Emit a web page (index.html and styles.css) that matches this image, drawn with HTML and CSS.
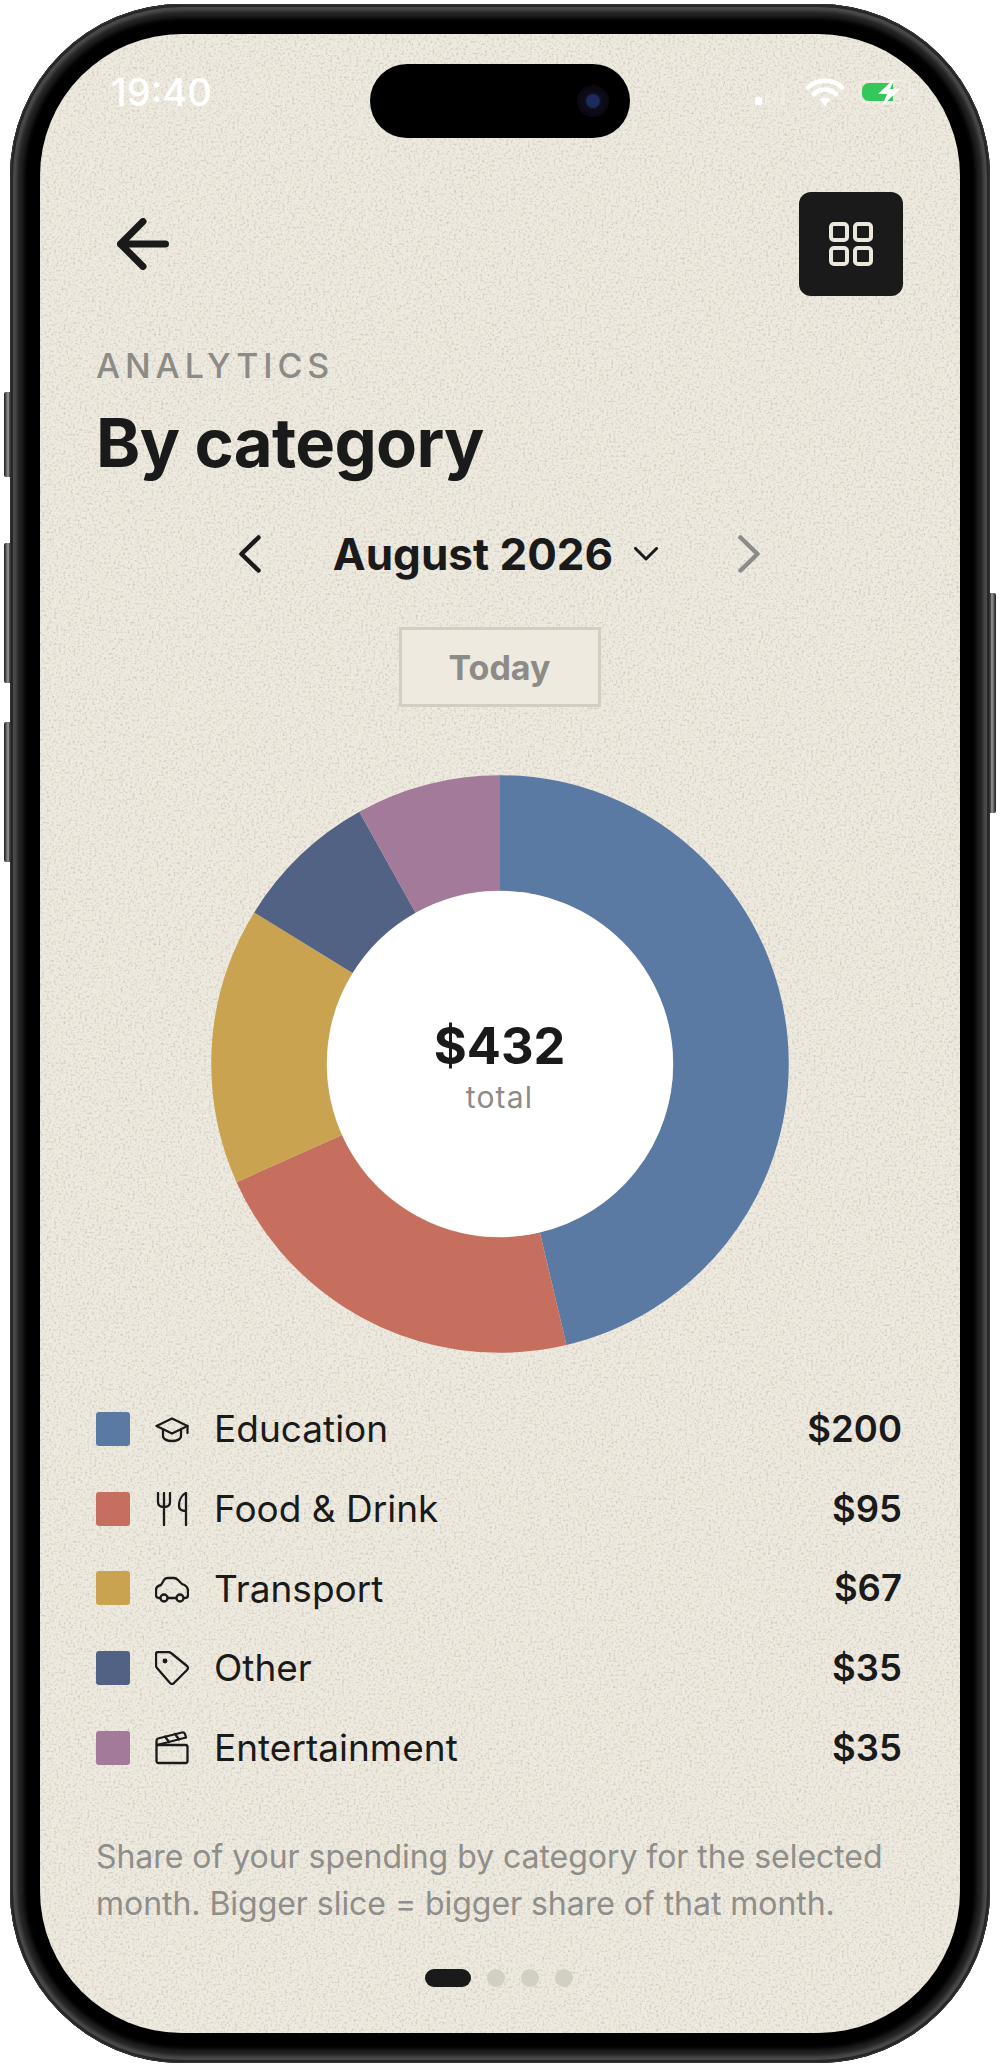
FILE: index.html
```html
<!DOCTYPE html>
<html lang="en">
<head>
    <meta charset="UTF-8">
    <meta name="viewport" content="width=device-width, initial-scale=1.0">
    <title>By category</title>
    <link rel="stylesheet" href="styles.css">
</head>
<body>
    <div class="phone">
        <span class="side-btn side-a"></span>
        <span class="side-btn side-b"></span>
        <span class="side-btn side-c"></span>
        <span class="side-btn side-d"></span>
        <div class="bezel">
            <div class="screen">
                <svg class="grain" width="100%" height="100%">
                    <filter id="grain-filter">
                        <feTurbulence type="fractalNoise" baseFrequency="0.42" numOctaves="3" seed="4"/>
                        <feColorMatrix type="matrix" values="0 0 0 0 0.55  0 0 0 0 0.53  0 0 0 0 0.46  0 0 0 -2 1.04"/>
                    </filter>
                    <rect width="100%" height="100%" filter="url(#grain-filter)"/>
                </svg>

                <div class="island"><span class="camera"></span></div>

                <div class="content">
                    <!-- status bar -->
                    <div class="status">
                        <span class="time">19:40</span>
                        <div class="status-icons">
                            <svg class="signal" width="30" height="28" viewBox="0 0 30 28">
                                <rect x="0" y="19" width="7" height="8" rx="1.5" fill="#fff"/>
                                <rect x="10" y="14" width="5" height="13" rx="1.5" fill="#fff" opacity=".18"/>
                                <rect x="18" y="9" width="5" height="18" rx="1.5" fill="#fff" opacity=".18"/>
                                <rect x="26" y="4" width="4" height="23" rx="1.5" fill="#fff" opacity=".18"/>
                            </svg>
                            <svg class="wifi" width="38" height="28" viewBox="0 0 38 28">
                                <path d="M2 9.5C11.5 .5 26.5 .5 36 9.5M8 16c6.500-5.800 15.500-5.800 22 0" fill="none" stroke="#fff" stroke-width="4.600" stroke-linecap="round"/>
                                <path d="M13.500 21.500c3-2.700 8-2.700 11 0L19 28z" fill="#fff"/>
                            </svg>
                            <svg class="battery" width="56" height="28" viewBox="0 0 56 28">
                                <rect x="1" y="3" width="50" height="22" rx="7" fill="none" stroke="#fff" stroke-opacity=".35" stroke-width="1.500"/>
                                <path d="M53 10v8c1.500-.5 2.500-2 2.500-4s-1-3.500-2.500-4z" fill="#fff" fill-opacity=".35"/>
                                <path d="M10 5h24v18H10a7 7 0 0 1-7-7v-4a7 7 0 0 1 7-7z" fill="#34c759"/>
                                <path d="M36 0L19 16h9l-5 12 18-17h-10z" fill="#fff"/>
                            </svg>
                        </div>
                    </div>

                    <!-- top bar -->
                    <div class="topbar">
                        <svg class="back" width="52" height="52" viewBox="0 0 52 52">
                            <path d="M3.500 26H48.500M26 3.500L3.500 26L26 48.500" fill="none" stroke="#1a1a1a" stroke-width="7" stroke-linecap="round" stroke-linejoin="round"/>
                        </svg>
                        <button class="grid-btn">
                            <svg width="44" height="44" viewBox="0 0 44 44">
                                <rect x="2" y="2" width="16" height="16" rx="3" class="grid-cell"/>
                                <rect x="26" y="2" width="16" height="16" rx="3" class="grid-cell"/>
                                <rect x="2" y="26" width="16" height="16" rx="3" class="grid-cell"/>
                                <rect x="26" y="26" width="16" height="16" rx="3" class="grid-cell"/>
                            </svg>
                        </button>
                    </div>

                    <div class="eyebrow">ANALYTICS</div>
                    <h1 class="title">By category</h1>

                    <!-- month switcher -->
                    <div class="month-row">
                        <svg width="22" height="38" viewBox="0 0 22 38">
                            <path d="M19.500 2.500L2.500 19L19.500 35.500" class="chev"/>
                        </svg>
                        <div class="month">
                            <span>August 2026</span>
                            <svg width="24" height="14" viewBox="0 0 24 14">
                                <path d="M1.500 1.500L12 12L22.500 1.500" class="chev chev-thin"/>
                            </svg>
                        </div>
                        <svg width="22" height="38" viewBox="0 0 22 38">
                            <path d="M2.500 2.500L19.500 19L2.500 35.500" class="chev chev-off"/>
                        </svg>
                    </div>

                    <div class="today-row"><button class="today">Today</button></div>

                    <!-- donut, one unit of the circle = $1 -->
                    <div class="chart">
                        <svg width="578" height="578" viewBox="0 0 578 578">
                            <g class="slices">
                                <circle cx="289" cy="289" r="231" pathLength="432" stroke="#5a7aa3" stroke-dasharray="200 232" stroke-dashoffset="0"/>
                                <circle cx="289" cy="289" r="231" pathLength="432" stroke="#c76f5f" stroke-dasharray="95 337" stroke-dashoffset="-200"/>
                                <circle cx="289" cy="289" r="231" pathLength="432" stroke="#c9a350" stroke-dasharray="67 365" stroke-dashoffset="-295"/>
                                <circle cx="289" cy="289" r="231" pathLength="432" stroke="#526285" stroke-dasharray="35 397" stroke-dashoffset="-362"/>
                                <circle cx="289" cy="289" r="231" pathLength="432" stroke="#a37a9a" stroke-dasharray="35 397" stroke-dashoffset="-397"/>
                            </g>
                        </svg>
                        <div class="chart-hole">
                            <div class="total">$432</div>
                            <div class="total-label">total</div>
                        </div>
                    </div>

                    <!-- legend -->
                    <ul class="legend">
                        <li class="legend-row">
                            <span class="swatch swatch-education"></span>
                            <svg class="cat-icon" viewBox="0 0 34 34">
                                <path d="M1.500 14L17 6.500L32.500 14L17 21.500Z"/>
                                <path d="M8 18V24C8 27 12 29 17 29C22 29 26 27 26 24V18M32.500 14V21"/>
                            </svg>
                            <span class="cat-name">Education</span>
                            <span class="cat-amount">$200</span>
                        </li>
                        <li class="legend-row">
                            <span class="swatch swatch-food"></span>
                            <svg class="cat-icon" viewBox="0 0 34 34">
                                <path d="M9 1V33M3 1V10Q3 15 9 15Q15 15 15 10V1"/>
                                <path d="M31 1V33M31 1C26 3 24 9 24 14C24 17 26 19 31 19"/>
                            </svg>
                            <span class="cat-name">Food &amp; Drink</span>
                            <span class="cat-amount">$95</span>
                        </li>
                        <li class="legend-row">
                            <span class="swatch swatch-transport"></span>
                            <svg class="cat-icon" viewBox="0 0 34 34">
                                <path d="M5 27H4Q1 27 1 24V19Q1 15 6 14L9 9Q10 7 13 7H19Q21 7 23 9L27 13Q33 15 33 20V24Q33 27 30 27H29M13 27H21"/>
                                <circle cx="9" cy="27" r="3.500"/>
                                <circle cx="25" cy="27" r="3.500"/>
                            </svg>
                            <span class="cat-name">Transport</span>
                            <span class="cat-amount">$67</span>
                        </li>
                        <li class="legend-row">
                            <span class="swatch swatch-other"></span>
                            <svg class="cat-icon" viewBox="0 0 34 34">
                                <path d="M1 3Q1 1 3 1H13Q15 1 16 2L32 15Q34 17 32 19L19 32Q17 34 15 32L2 17Q1 16 1 14Z"/>
                                <circle cx="10" cy="10" r="1.300" class="cat-dot"/>
                            </svg>
                            <span class="cat-name">Other</span>
                            <span class="cat-amount">$35</span>
                        </li>
                        <li class="legend-row">
                            <span class="swatch swatch-fun"></span>
                            <svg class="cat-icon" viewBox="0 0 34 34">
                                <rect x="1.500" y="14" width="31" height="18" rx="2"/>
                                <path d="M1.500 14V10Q1.500 8 3 7.500L27 1.500Q29 1 30 3L31 6.500L2 14M10 5.500L14 11M20 3L24 8.500"/>
                            </svg>
                            <span class="cat-name">Entertainment</span>
                            <span class="cat-amount">$35</span>
                        </li>
                    </ul>

                    <p class="note">Share of your spending by category for the selected month. Bigger slice = bigger share of that month.</p>

                    <div class="pager">
                        <span class="pager-on"></span>
                        <span class="pager-dot"></span>
                        <span class="pager-dot"></span>
                        <span class="pager-dot"></span>
                    </div>
                </div>
            </div>
        </div>
    </div>
</body>
</html>
```

FILE: styles.css
```css
* {
    box-sizing: border-box;
}
body {
    margin: 0;
    padding: 4px 10px;
    background-color: #fff;
    font-family: 'Inter', 'Liberation Sans', sans-serif;
    color: #1a1a1a;
}
.phone {
    position: relative;
    height: 2059px;
    padding: 12px;
    border-radius: 172px;
    background: #1f1f1f;
    box-shadow: inset 0 0 0 1px #333, inset 0 0 0 3px #262626, inset 0 0 3px 7px #4a4a4a, inset 0 0 0 10px #242424;
}
.side-btn {
    position: absolute;
    width: 6px;
    background: linear-gradient(90deg, #1c1c1c, #999 70%, #2a2a2a);
}
.side-a {
    left: -6px;
    top: 388px;
    height: 85px;
    border-radius: 2px 0 0 2px;
}
.side-b {
    left: -6px;
    top: 539px;
    height: 140px;
    border-radius: 2px 0 0 2px;
}
.side-c {
    left: -6px;
    top: 718px;
    height: 140px;
    border-radius: 2px 0 0 2px;
}
.side-d {
    right: -6px;
    top: 589px;
    height: 220px;
    border-radius: 0 2px 2px 0;
    background: linear-gradient(270deg, #1c1c1c, #999 70%, #2a2a2a);
}
.bezel {
    height: 100%;
    padding: 18px;
    border-radius: 160px;
    background: #000;
    box-shadow: inset 0 0 5px 1px #2c2c2c;
}
.screen {
    position: relative;
    height: 100%;
    border-radius: 142px;
    background-color: #efeadf;
    overflow: hidden;
}
.grain {
    position: absolute;
    inset: 0;
}
.island {
    position: absolute;
    left: 330px;
    top: 30px;
    width: 260px;
    height: 74px;
    border-radius: 37px;
    background: #000;
}
.camera {
    position: absolute;
    right: 21px;
    top: 21px;
    width: 32px;
    height: 32px;
    border-radius: 50%;
    background: radial-gradient(circle, #1c2a5c 0 6px, #0d0d1c 8px, #0a0710 16px);
}
.content {
    position: relative;
    padding: 44px 57px 0 56px;
}

/* status bar */
.status {
    display: flex;
    justify-content: space-between;
    align-items: center;
    height: 28px;
    padding-left: 15px;
}
.time {
    color: #fff;
    font-size: 38px;
    font-weight: 500;
    line-height: 28px;
}
.status-icons {
    display: flex;
    align-items: center;
    gap: 15px;
    margin-right: -12px;
}
.signal {
    margin-right: 6px;
}

/* top bar */
.topbar {
    display: flex;
    justify-content: space-between;
    align-items: center;
    margin-top: 86px;
    padding-left: 21px;
}
.grid-btn {
    display: flex;
    justify-content: center;
    align-items: center;
    width: 104px;
    height: 104px;
    padding: 0;
    border: none;
    border-radius: 12px;
    background: #1a1a1a;
}
.grid-cell {
    fill: none;
    stroke: #ece7dc;
    stroke-width: 4;
}

.eyebrow {
    margin-top: 52px;
    color: #8c8b88;
    font-size: 34px;
    font-weight: 500;
    line-height: 36px;
    letter-spacing: 4.900px;
}
.title {
    margin: 19px 0 0;
    font-size: 67px;
    font-weight: 700;
    line-height: 80px;
    letter-spacing: -0.7px;
}

/* month switcher */
.month-row {
    display: flex;
    justify-content: space-between;
    align-items: center;
    margin-top: 46px;
    padding: 0 143px;
}
.month {
    display: flex;
    align-items: center;
    gap: 21px;
    margin-right: 8px;
    font-size: 44px;
    font-weight: 700;
    line-height: 50px;
}
.chev {
    fill: none;
    stroke: #1a1a1a;
    stroke-width: 4.500;
    stroke-linecap: round;
    stroke-linejoin: round;
}
.chev-thin {
    stroke-width: 3;
}
.chev-off {
    stroke: #8c8b88;
}
.today-row {
    display: flex;
    justify-content: center;
    margin-top: 48px;
}
.today {
    width: 202px;
    height: 80px;
    padding: 0;
    border: 3px solid #d2cec2;
    background: #efeadf;
    color: #8c8b88;
    font-family: inherit;
    font-size: 34px;
    font-weight: 700;
}

/* donut */
.chart {
    position: relative;
    width: 578px;
    height: 578px;
    margin: 68px auto 0;
}
.slices {
    transform: rotate(-90deg);
    transform-origin: 289px 289px;
}
.slices circle {
    fill: none;
    stroke-width: 115.500;
}
.chart-hole {
    position: absolute;
    left: 116px;
    top: 116px;
    width: 346px;
    height: 346px;
    border-radius: 50%;
    background: #fff;
    text-align: center;
    padding-top: 126px;
}
.total {
    font-size: 50.500px;
    font-weight: 700;
    line-height: 58px;
}
.total-label {
    margin-top: 4px;
    color: #8c8b88;
    font-size: 30px;
    line-height: 36px;
    letter-spacing: 1.200px;
}

/* legend */
.legend {
    margin: 36px 0 0;
    padding: 0;
    list-style: none;
}
.legend-row {
    display: flex;
    align-items: center;
    height: 79.700px;
}
.swatch {
    width: 34px;
    height: 34px;
    border-radius: 3px;
}
.swatch-education { background: #5a7aa3; }
.swatch-food { background: #c76f5f; }
.swatch-transport { background: #c9a350; }
.swatch-other { background: #526285; }
.swatch-fun { background: #a37a9a; }
.cat-icon {
    width: 34px;
    height: 34px;
    margin: 0 25px 0 25px;
    fill: none;
    stroke: #1a1a1a;
    stroke-width: 2.300;
    stroke-linecap: round;
    stroke-linejoin: round;
}
.cat-dot {
    fill: #1a1a1a;
}
.cat-name {
    flex: 1;
    font-size: 37px;
}
.cat-amount {
    font-size: 36.500px;
    font-weight: 600;
    margin-right: 1px;
}

.note {
    margin: 46px 0 0;
    color: #8f8e8b;
    font-size: 32px;
    line-height: 47px;
    letter-spacing: -0.040px;
}

/* pager */
.pager {
    display: flex;
    justify-content: center;
    align-items: center;
    gap: 16px;
    margin-top: 42px;
    padding-right: 2px;
}
.pager span {
    height: 18px;
    border-radius: 9px;
}
.pager-on {
    width: 46px;
    background: #1a1a1a;
}
.pager-dot {
    width: 18px;
    background: #d2cfc3;
}
```
